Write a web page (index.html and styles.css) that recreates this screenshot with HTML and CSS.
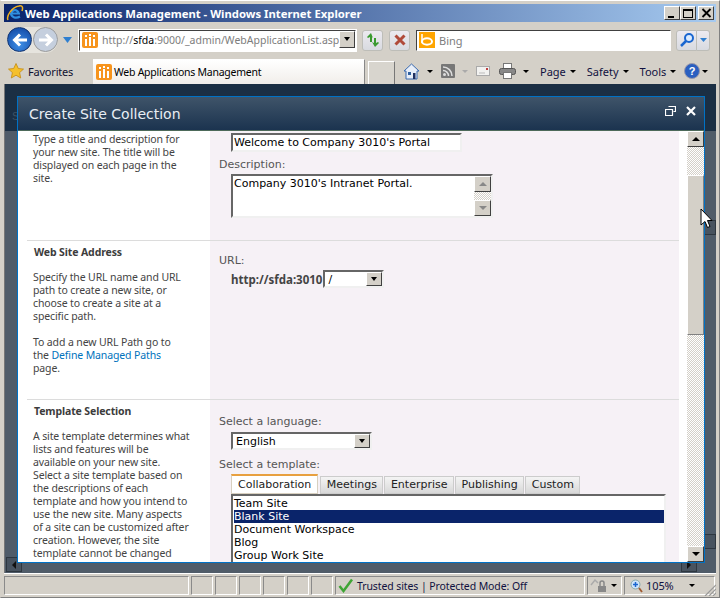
FILE: index.html
```html
<!DOCTYPE html>
<html lang="en">
<head>
    <meta charset="UTF-8">
    <title>Web Applications Management</title>
    <link rel="stylesheet" href="styles.css">
</head>
<body>
<div class="window">
    <div class="titlebar">
        <svg class="ie-logo" width="18" height="18" viewBox="0 0 18 18"><path d="M14 9.500H5.500C5.700 6.500 8.800 5.500 10.500 6.500 12 7.300 12.500 8.500 12.500 8.500" fill="none" stroke="#2f8fe0" stroke-width="2.200"/><path d="M5 9c0 4 4.500 6 9 3.500" fill="none" stroke="#2f8fe0" stroke-width="2.200"/><path d="M2 16C0 12 6 3 13 2c4-1 4 2 3 5" fill="none" stroke="#f0b020" stroke-width="1.500"/></svg>
        <span class="title-text">Web Applications Management - Windows Internet Explorer</span>
        <div class="win-btns">
            <span class="win-btn"><i class="g-min"></i></span>
            <span class="win-btn"><i class="g-max"></i></span>
            <span class="win-btn win-close">
                <svg width="11" height="10" viewBox="0 0 11 10"><path d="M1.500 1l8 8M9.500 1l-8 8" stroke="#000" stroke-width="1.800"/></svg>
            </span>
        </div>
    </div>

    <div class="navbar">
        <div class="nav-arrows">
            <span class="nav-round nav-back">
                <svg width="20" height="20" viewBox="0 0 20 20"><path d="M17 10H5M10 4.500L4.500 10l5.500 5.500" fill="none" stroke="#fff" stroke-width="3"/></svg>
            </span>
            <span class="nav-round nav-fwd">
                <svg width="20" height="20" viewBox="0 0 20 20"><path d="M3 10h12M10 4.500l5.500 5.500-5.500 5.500" fill="none" stroke="#fff" stroke-width="3"/></svg>
            </span>
        </div>
        <svg class="nav-drop" width="9" height="6" viewBox="0 0 9 6"><path d="M0 0h9L4.500 6z" fill="#2f7fd0"/></svg>
        <div class="address">
            <svg class="fav" width="16" height="16" viewBox="0 0 16 16"><rect width="16" height="16" rx="2" fill="#f7941d"/><path d="M3 14V7h2v7zM7 14V5h2v9zM11 14V7h2v7z" fill="#fff"/><path d="M3 3h2v2H3zM7 2h2v2H7zM11 3h2v2h-2z" fill="#fff"/></svg>
            <span class="addr-text">http://<b>sfda</b>:9000/_admin/WebApplicationList.asp</span>
            <span class="sel-arrow addr-arrow"><i></i></span>
        </div>
        <span class="tool-btn">
            <svg width="16" height="16" viewBox="0 0 16 16"><path d="M6 1L2 5l1 1 2-1v5h2V5l1 1zM10 15l4-4-1-1-2 1V6H9v5l-2-1z" fill="#3a9a30"/></svg>
        </span>
        <span class="tool-btn">
            <svg width="14" height="14" viewBox="0 0 14 14"><path d="M2.500 2.500l9 9M11.500 2.500l-9 9" stroke="#b04a3a" stroke-width="3"/></svg>
        </span>
        <div class="search">
            <svg width="16" height="16" viewBox="0 0 16 16"><rect width="16" height="16" fill="#ffa500"/><path d="M3 2v9" stroke="#fff" stroke-width="1.500"/><ellipse cx="8" cy="9.500" rx="5" ry="3.200" fill="none" stroke="#fff" stroke-width="2"/></svg>
            <span class="search-text">Bing</span>
        </div>
        <span class="tool-btn search-go">
            <svg width="16" height="16" viewBox="0 0 16 16"><circle cx="10" cy="6" r="4" fill="#dcecff" stroke="#1a66d0" stroke-width="2"/><path d="M7 9l-5 5" stroke="#1a66d0" stroke-width="2.500"/></svg>
        </span>
        <span class="tool-btn search-more">
            <svg width="7" height="4" viewBox="0 0 7 4"><path d="M0 0h7L3.500 4z" fill="#2f7fd0"/></svg>
        </span>
    </div>

    <div class="tabbar">
        <span class="favorites">
            <svg width="16" height="16" viewBox="0 0 16 16"><path d="M8 .5l2.300 5 5.200.6-3.900 3.500 1.100 5.400L8 12.200 3.300 15l1.100-5.400L.5 6.100l5.200-.6z" fill="#f5c02c" stroke="#c48a10" stroke-width=".8"/></svg>
            Favorites
        </span>
        <div class="tab">
            <svg width="16" height="16" viewBox="0 0 16 16"><rect width="16" height="16" rx="2" fill="#f7941d"/><path d="M3 14V7h2v7zM7 14V5h2v9zM11 14V7h2v7z" fill="#fff"/><path d="M3 3h2v2H3zM7 2h2v2H7zM11 3h2v2h-2z" fill="#fff"/></svg>
            Web Applications Management
        </div>
        <span class="new-tab"></span>
        <div class="commands">
            <span class="cmd">
                <svg width="17" height="17" viewBox="0 0 17 17"><path d="M8.500 1L1 8h2v8h11V8h2z" fill="#e8eef8" stroke="#3a6ab0"/><rect x="5" y="9" width="3" height="3" fill="#3060a0"/><rect x="10" y="10" width="2.500" height="6" fill="#203060"/></svg>
                <i class="caret"></i>
            </span>
            <span class="cmd">
                <svg width="14" height="14" viewBox="0 0 14 14"><rect width="14" height="14" rx="1" fill="#777"/><circle cx="3.500" cy="10.500" r="1.500" fill="#ddd"/><path d="M2 6.500a5.500 5.500 0 0 1 5.500 5.500M2 3a9 9 0 0 1 9 9" fill="none" stroke="#ddd" stroke-width="1.500"/></svg>
                <i class="caret caret-off"></i>
            </span>
            <span class="cmd">
                <svg width="14" height="10" viewBox="0 0 14 10"><rect x=".5" y=".5" width="13" height="9" fill="#f2f2f0" stroke="#aaa"/><path d="M3 7h6" stroke="#bbb"/><rect x="10" y="2" width="2" height="2" fill="#c04040"/></svg>
            </span>
            <span class="cmd cmd-print">
                <svg width="17" height="16" viewBox="0 0 17 16"><rect x="4.500" y=".5" width="8" height="5" fill="#fff" stroke="#777"/><rect x=".5" y="5.500" width="16" height="6" rx="2" fill="#888" stroke="#555"/><rect x="4.500" y="9.500" width="8" height="6" fill="#fff" stroke="#777"/></svg>
                <i class="caret"></i>
            </span>
            <span class="cmd cmd-text">Page <i class="caret"></i></span>
            <span class="cmd cmd-text">Safety <i class="caret"></i></span>
            <span class="cmd cmd-text cmd-tools">Tools <i class="caret"></i></span>
            <span class="cmd">
                <svg width="16" height="16" viewBox="0 0 16 16"><circle cx="8" cy="8" r="7.500" fill="#2a5fc0" stroke="#99a"/><text x="8" y="12" font-size="11" font-weight="bold" fill="#fff" text-anchor="middle" font-family="Liberation Sans">?</text></svg>
                <i class="caret"></i>
            </span>
        </div>
    </div>

    <div class="viewport">
        <span class="under-s">S</span>
        <span class="under-btn under-left"><i></i></span>
        <span class="under-btn under-right"><i></i></span>
        <span class="under-btn under-mid"></span>
        <span class="under-btn under-down"></span>
        <div class="dialog">
            <div class="dlg-head">
                <span class="dlg-title">Create Site Collection</span>
                <svg class="dlg-icon" width="11" height="10" viewBox="0 0 11 10"><path d="M3.500.5h7v5h-2M.5 3.500h7v6h-7z" fill="none" stroke="#fff" stroke-width="1.200"/></svg>
                <svg class="dlg-icon" width="10" height="10" viewBox="0 0 10 10"><path d="M1 1l8 8M9 1L1 9" stroke="#fff" stroke-width="2.200"/></svg>
            </div>
            <div class="dlg-main">
                <div class="dlg-content">
                    <section class="row row-title">
                        <div class="row-info">
                            <p>Type a title and description for your new site. The title will be displayed on each page in the site.</p>
                        </div>
                        <div class="row-field">
                            <div class="box input-title">Welcome to Company 3010's Portal</div>
                            <div class="label label-desc">Description:</div>
                            <div class="box textarea">
                                Company 3010's Intranet Portal.
                                <div class="ta-scroll">
                                    <span class="sb-btn sb-off"><i class="up"></i></span>
                                    <span class="sb-btn sb-off"><i class="down"></i></span>
                                </div>
                            </div>
                        </div>
                    </section>
                    <section class="row row-url">
                        <div class="row-info">
                            <h3>Web Site Address</h3>
                            <p>Specify the URL name and URL path to create a new site, or choose to create a site at a specific path.</p>
                            <p>To add a new URL Path go to<br>the <a href="#">Define Managed Paths</a><br>page.</p>
                        </div>
                        <div class="row-field">
                            <div class="label">URL:</div>
                            <div class="url-line">
                                <b>http://sfda:3010</b>
                                <div class="box select select-path">/<span class="sel-arrow"><i></i></span></div>
                            </div>
                        </div>
                    </section>
                    <section class="row row-template">
                        <div class="row-info info-wide">
                            <h3>Template Selection</h3>
                            <p>A site template determines what<br>lists and features will be<br>available on your new site.<br>Select a site template based on<br>the descriptions of each<br>template and how you intend to<br>use the new site. Many aspects<br>of a site can be customized after<br>creation. However, the site<br>template cannot be changed</p>
                        </div>
                        <div class="row-field">
                            <div class="label">Select a language:</div>
                            <div class="box select select-lang">English<span class="sel-arrow"><i></i></span></div>
                            <div class="label label-tpl">Select a template:</div>
                            <div class="tabs">
                                <span class="tpl-tab tpl-active">Collaboration</span>
                                <span class="tpl-tab">Meetings</span>
                                <span class="tpl-tab">Enterprise</span>
                                <span class="tpl-tab">Publishing</span>
                                <span class="tpl-tab">Custom</span>
                            </div>
                            <div class="box listbox">
                                <div>Team Site</div>
                                <div class="selected">Blank Site</div>
                                <div>Document Workspace</div>
                                <div>Blog</div>
                                <div>Group Work Site</div>
                            </div>
                        </div>
                    </section>
                </div>
                <div class="dlg-scroll">
                    <span class="sb-btn"><i class="up"></i></span>
                    <div class="sb-track"><div class="sb-thumb"></div></div>
                    <span class="sb-btn"><i class="down"></i></span>
                </div>
            </div>
        </div>
        <svg class="cursor" width="13" height="21" viewBox="0 0 13 21"><path d="M1 1v16l4-3.500 2.500 6 2.500-1-2.500-6H12z" fill="#fff" stroke="#000"/></svg>
    </div>

    <div class="statusbar">
        <span class="st-cell st-main"></span>
        <span class="st-cell st-small"></span>
        <span class="st-cell st-small"></span>
        <span class="st-cell st-small"></span>
        <span class="st-cell st-small"></span>
        <span class="st-cell st-small"></span>
        <span class="st-cell st-small"></span>
        <span class="st-cell st-zone">
            <svg width="16" height="15" viewBox="0 0 16 15"><path d="M1.500 8l4 5L14 1.500" fill="none" stroke="#3fa535" stroke-width="2.500"/></svg>
            Trusted sites | Protected Mode: Off
        </span>
        <span class="st-cell st-lock">
            <svg width="17" height="15" viewBox="0 0 17 15"><path d="M1 7l4-5 3 3" fill="none" stroke="#aaa" stroke-width="1.500"/><rect x="8" y="8" width="8" height="6" fill="#888"/><path d="M10 8V5a2 2 0 0 1 4 0v3" fill="none" stroke="#888" stroke-width="1.500"/></svg>
            <i class="caret"></i>
        </span>
        <span class="st-cell st-zoom">
            <svg width="13" height="14" viewBox="0 0 13 14"><circle cx="5.500" cy="5.500" r="4.500" fill="#cfe4fa" stroke="#8aa"/><path d="M5.500 3v5M3 5.500h5" stroke="#1a66d0" stroke-width="1.500"/><path d="M9 9l3 4" stroke="#a05a30" stroke-width="1.800"/></svg>
            105%
            <i class="caret caret-zoom"></i>
        </span>
        <svg class="grip" width="12" height="12" viewBox="0 0 12 12"><path d="M1 12L12 1M5 12l7-7M9 12l3-3" stroke="#999" stroke-width="1.200"/></svg>
    </div>
</div>
</body>
</html>
```
FILE: styles.css
```css
html, body {
    margin: 0;
    padding: 0;
}

body {
    width: 720px;
    height: 598px;
    overflow: hidden;
    font-family: "Liberation Sans", Arial, sans-serif;
    font-size: 12px;
    color: #000;
}

svg {
    display: block;
    flex: none;
}

.window {
    box-sizing: border-box;
    width: 720px;
    height: 598px;
    display: flex;
    flex-direction: column;
    background: #d4d0c8;
    border: 1px solid #808080;
    border-top: 1px solid #fff;
    border-left-color: #d4d0c8;
    padding: 3px 3px 0 3px;
}

/* title bar */
.titlebar {
    height: 18px;
    flex: none;
    display: flex;
    align-items: center;
    background: linear-gradient(to right, #0a246a, #a6caf0);
}

.ie-logo {
    margin: 0 1px 0 2px;
}

.title-text {
    font-family: "Noto Sans", sans-serif;
    font-size: 11.3px;
    font-weight: bold;
    color: #fff;
}

.win-btns {
    margin-left: auto;
    display: flex;
    margin-right: 2px;
}

.win-btn {
    box-sizing: border-box;
    width: 16px;
    height: 14px;
    display: flex;
    align-items: center;
    justify-content: center;
    background: #d4d0c8;
    border: 1px solid;
    border-color: #fff #404040 #404040 #fff;
    position: relative;
}

.win-close {
    margin-left: 2px;
}

.g-min {
    width: 6px;
    height: 2px;
    background: #000;
    margin-top: 7px;
    margin-right: 3px;
}

.g-max {
    box-sizing: border-box;
    width: 10px;
    height: 9px;
    border: 1px solid #000;
    border-top-width: 2px;
}

/* address row */
.navbar {
    height: 36px;
    flex: none;
    display: flex;
    align-items: center;
}

.nav-arrows {
    display: flex;
    margin-left: 3px;
    background: #e6e4de;
    border-radius: 13px;
    height: 26px;
}

.nav-round {
    box-sizing: border-box;
    width: 25px;
    height: 25px;
    border-radius: 50%;
    display: flex;
    align-items: center;
    justify-content: center;
}

.nav-back {
    background: radial-gradient(circle at 50% 70%, #3f90e8, #0b3f9c);
    border: 1px solid #12336f;
}

.nav-fwd {
    background: #c5cfde;
    border: 1px solid #9a9a9a;
    margin-left: 1px;
}

.nav-drop {
    margin: 0 7px 0 5px;
}

.address {
    box-sizing: border-box;
    width: 277px;
    height: 21px;
    display: flex;
    align-items: center;
    background: #fff;
    border: 1px solid;
    border-color: #404040 #fff #fff #404040;
    outline: 1px solid #fff;
    padding-left: 2px;
    position: relative;
}

.addr-text {
    font-family: "Noto Sans", sans-serif;
    font-size: 10.5px;
    color: #7d7d7d;
    margin-left: 4px;
    white-space: nowrap;
}

.addr-text b {
    font-weight: normal;
    color: #000;
}

.addr-arrow {
    position: absolute;
    right: 0;
    top: 1px;
}

.tool-btn {
    box-sizing: border-box;
    width: 21px;
    height: 21px;
    margin-left: 6px;
    display: flex;
    align-items: center;
    justify-content: center;
    background: linear-gradient(#eceaf0, #d8dae0);
    border: 1px solid #bdbdb8;
    border-radius: 3px;
}

.search {
    box-sizing: border-box;
    width: 255px;
    height: 21px;
    margin-left: 6px;
    display: flex;
    align-items: center;
    background: #fff;
    border: 1px solid;
    border-color: #404040 #fff #fff #404040;
    padding-left: 2px;
}

.search-text {
    font-family: "Noto Sans", sans-serif;
    font-size: 11px;
    color: #7d7d7d;
    margin-left: 4px;
}

.tool-btn.search-go {
    margin-left: 5px;
    border-radius: 3px 0 0 3px;
}

.tool-btn.search-more {
    margin-left: 0;
    width: 13px;
    border-left: 0;
    border-radius: 0 3px 3px 0;
}

/* favorites and tabs */
.tabbar {
    height: 26px;
    flex: none;
    display: flex;
    align-items: flex-end;
}

.favorites {
    display: flex;
    align-items: center;
    gap: 4px;
    width: 85px;
    height: 24px;
    margin-left: 4px;
    font-family: "Noto Sans", sans-serif;
    font-size: 11px;
    letter-spacing: -0.2px;
    color: #101030;
    align-self: center;
}

.tab {
    box-sizing: border-box;
    width: 272px;
    height: 25px;
    display: flex;
    align-items: center;
    gap: 2px;
    padding-left: 3px;
    background: linear-gradient(#fff, #f1eeea);
    border-top: 1px solid #fff;
    border-right: 1px solid #888;
    font-family: "Noto Sans", sans-serif;
    font-size: 10.5px;
    letter-spacing: -0.25px;
}

.new-tab {
    box-sizing: border-box;
    width: 27px;
    height: 23px;
    margin-left: 3px;
    background: #d8d5ce;
    border-top: 1px solid #fff;
    border-left: 1px solid #fff;
    border-right: 1px solid #777;
}

.commands {
    flex: 1;
    display: flex;
    align-items: center;
    align-self: stretch;
    padding-left: 8px;
}

.cmd {
    display: flex;
    align-items: center;
    gap: 7px;
    margin-right: 8px;
}

.cmd-print {
    margin-left: 1px;
    margin-right: 11px;
}

.cmd-text {
    font-family: "Noto Sans", sans-serif;
    font-size: 11px;
    color: #101040;
    gap: 4px;
    margin-right: 11px;
}

.cmd-text.cmd-tools {
    margin-right: 8px;
}

.cmd:last-child {
    margin-right: 0;
    gap: 2px;
}

.caret {
    width: 0;
    height: 0;
    border: 3px solid transparent;
    border-top: 3px solid #000;
    border-bottom: 0;
}

.caret-off {
    border-top-color: #aaa;
}

/* page under the dialog */
.viewport {
    height: 489px;
    flex: none;
    box-sizing: border-box;
    background: linear-gradient(#1b2f44 47px, #505c69 47px);
    border-left: 1px solid #777;
    padding: 12px 0 0 12px;
    position: relative;
}

.under-s {
    position: absolute;
    left: 7px;
    top: 26px;
    font-size: 11px;
    color: #3d5264;
}

.under-btn {
    position: absolute;
    box-sizing: border-box;
    display: flex;
    align-items: center;
    justify-content: center;
    width: 16px;
    height: 15px;
    background: #48535f;
    border: 1px solid #2e3740;
}

.under-btn i {
    width: 0;
    height: 0;
    border: 4px solid transparent;
}

.under-left {
    left: 1px;
    bottom: 1px;
}

.under-left i {
    border-left: 0;
    border-right: 4px solid #111;
}

.under-right {
    left: 676px;
    bottom: 1px;
}

.under-right i {
    border-right: 0;
    border-left: 4px solid #111;
}

.under-mid {
    left: 699px;
    top: 136px;
    width: 12px;
}

.under-down {
    left: 699px;
    top: 450px;
    width: 12px;
}

.dialog {
    box-sizing: border-box;
    width: 688px;
    height: 467px;
    display: flex;
    flex-direction: column;
    border: 1px solid #0072c6;
    background: #fff;
    position: relative;
}

.dlg-head {
    height: 34px;
    flex: none;
    display: flex;
    align-items: center;
    gap: 10px;
    padding: 0 8px 0 11px;
    background: linear-gradient(#3f5469, #1b334f);
    border-bottom: 1px solid #4d6a5a;
    box-sizing: border-box;
}

.dlg-title {
    font-family: "DejaVu Sans", sans-serif;
    font-size: 14px;
    color: #e8eef4;
    margin-right: auto;
}

.dlg-icon {
    margin-top: -6px;
}

.dlg-main {
    flex: 1;
    min-height: 0;
    display: flex;
}

.dlg-content {
    flex: 1;
    min-width: 0;
    overflow: hidden;
    padding: 0 8px 0 9px;
}

.row {
    display: flex;
    border-bottom: 1px solid #dcdcdc;
}

.row-title {
    height: 109px;
}

.row-url {
    height: 158px;
}

.row-template {
    border-bottom: 0;
    height: 180px;
}

.row-info {
    box-sizing: border-box;
    width: 183px;
    flex: none;
    padding: 2px 22px 0 6px;
    font-family: "Noto Sans", sans-serif;
    font-size: 10.5px;
    line-height: 13px;
    letter-spacing: -0.12px;
    color: #444;
}

.info-wide {
    padding-right: 0;
}

.row-info p {
    margin: 0 0 13px;
}

.row-info h3 {
    font-size: 10.5px;
    line-height: 13px;
    font-weight: bold;
    margin: 3px 0 12px 1px;
    color: #3c3c3c;
}

.row-info a {
    color: #0072bc;
    text-decoration: none;
}

.row-field {
    flex: 1;
    box-sizing: border-box;
    background: #f6f1f6;
    padding-left: 9px;
    font-family: "DejaVu Sans", sans-serif;
    font-size: 11px;
    color: #000;
}

.row-url .row-field {
    padding-top: 13px;
}

.row-template .row-field {
    padding-top: 15px;
}

.label {
    line-height: 13px;
    color: #555;
}

.label-desc {
    margin-top: 6px;
}

.label-tpl {
    margin-top: 8px;
}

.box {
    box-sizing: border-box;
    background: #fff;
    border: 2px solid;
    border-color: #666 #f0f0f0 #f0f0f0 #666;
    margin-left: 12px;
    position: relative;
}

.input-title {
    width: 231px;
    height: 19px;
    margin-top: 2px;
    line-height: 15px;
    padding-left: 1px;
    color: #000;
}

.textarea {
    width: 262px;
    height: 44px;
    margin-top: 3px;
    padding: 1px 0 0 1px;
    line-height: 13px;
}

.ta-scroll {
    position: absolute;
    top: 0;
    right: 0;
    bottom: 0;
    width: 17px;
    display: flex;
    flex-direction: column;
    justify-content: space-between;
    background: repeating-conic-gradient(#d4d0c8 0 25%, #fff 0 50%) 0 0 / 2px 2px;
}

.sb-btn {
    box-sizing: border-box;
    width: 17px;
    height: 16px;
    flex: none;
    display: flex;
    align-items: center;
    justify-content: center;
    background: #d4d0c8;
    border: 1px solid;
    border-color: #fff #404040 #404040 #fff;
}

.sb-btn i {
    width: 0;
    height: 0;
    border: 4px solid transparent;
}

.sb-btn .up {
    border-top: 0;
    border-bottom: 4px solid #000;
}

.sb-btn .down {
    border-bottom: 0;
    border-top: 4px solid #000;
}

.sb-off .up {
    border-bottom-color: #888;
}

.sb-off .down {
    border-top-color: #888;
}

.url-line {
    display: flex;
    align-items: center;
    margin: 3px 0 0 12px;
}

.url-line b {
    font-family: "Noto Sans", sans-serif;
    font-size: 11.5px;
    color: #444;
}

.select {
    height: 18px;
    line-height: 15px;
    padding-left: 3px;
}

.select-path {
    width: 61px;
    margin-left: 1px;
}

.select-lang {
    width: 141px;
    margin-top: 4px;
}

.sel-arrow {
    position: absolute;
    top: 0;
    right: 0;
    box-sizing: border-box;
    width: 16px;
    height: 14px;
    display: flex;
    align-items: center;
    justify-content: center;
    background: #d4d0c8;
    border: 1px solid;
    border-color: #fff #404040 #404040 #fff;
}

.sel-arrow i {
    width: 0;
    height: 0;
    border: 3px solid transparent;
    border-bottom: 0;
    border-top: 4px solid #000;
}

.addr-arrow {
    height: 17px;
}

.tabs {
    display: flex;
    align-items: flex-end;
    gap: 1px;
    margin: 3px 0 0 12px;
    height: 20px;
}

.tpl-tab {
    box-sizing: border-box;
    height: 18px;
    line-height: 15px;
    padding: 0 5.5px;
    background: linear-gradient(#f4f4f4, #d8d8d8);
    border: 1px solid #ccc;
    color: #222;
    font-size: 11px;
}

.tpl-active {
    height: 20px;
    line-height: 17px;
    padding: 0 6px;
    background: #fff;
    border: 1px solid #d8d0c0;
    border-top: 2px solid #e8a040;
    margin-right: 1px;
}

.listbox {
    width: 435px;
    height: 90px;
    line-height: 13px;
    padding: 1px 0 0 1px;
}

.listbox .selected {
    background: #0a246a;
    color: #fff;
}

/* main scrollbar of the dialog */
.dlg-scroll {
    width: 17px;
    flex: none;
    display: flex;
    flex-direction: column;
}

.sb-track {
    flex: 1;
    padding-top: 28px;
    background: repeating-conic-gradient(#d4d0c8 0 25%, #fff 0 50%) 0 0 / 2px 2px;
}

.sb-thumb {
    box-sizing: border-box;
    height: 160px;
    background: #d4d0c8;
    border: 1px solid;
    border-color: #fff #808080 #808080 #fff;
}

.cursor {
    position: absolute;
    left: 695px;
    top: 124px;
}

/* status bar */
.statusbar {
    flex: 1;
    display: flex;
    align-items: center;
    gap: 2px;
    border-top: 1px solid #fff;
    font-family: "Noto Sans", sans-serif;
    font-size: 10.5px;
    letter-spacing: -0.1px;
    position: relative;
}

.st-cell {
    box-sizing: border-box;
    height: 19px;
    display: flex;
    align-items: center;
    border: 1px solid;
    border-color: #8a8a8a #fff #fff #8a8a8a;
}

.st-main {
    width: 185px;
}

.st-small {
    width: 22px;
}

.st-zone {
    width: 250px;
    gap: 3px;
    padding-left: 2px;
    color: #101040;
    white-space: nowrap;
}

.st-lock {
    width: 35px;
    gap: 4px;
    padding-left: 2px;
}

.st-zoom {
    width: 91px;
    gap: 3px;
    padding-left: 5px;
    font-size: 11px;
    color: #101040;
}

.caret-zoom {
    margin-left: 12px;
}

.grip {
    position: absolute;
    right: 0;
    bottom: 1px;
}
```
